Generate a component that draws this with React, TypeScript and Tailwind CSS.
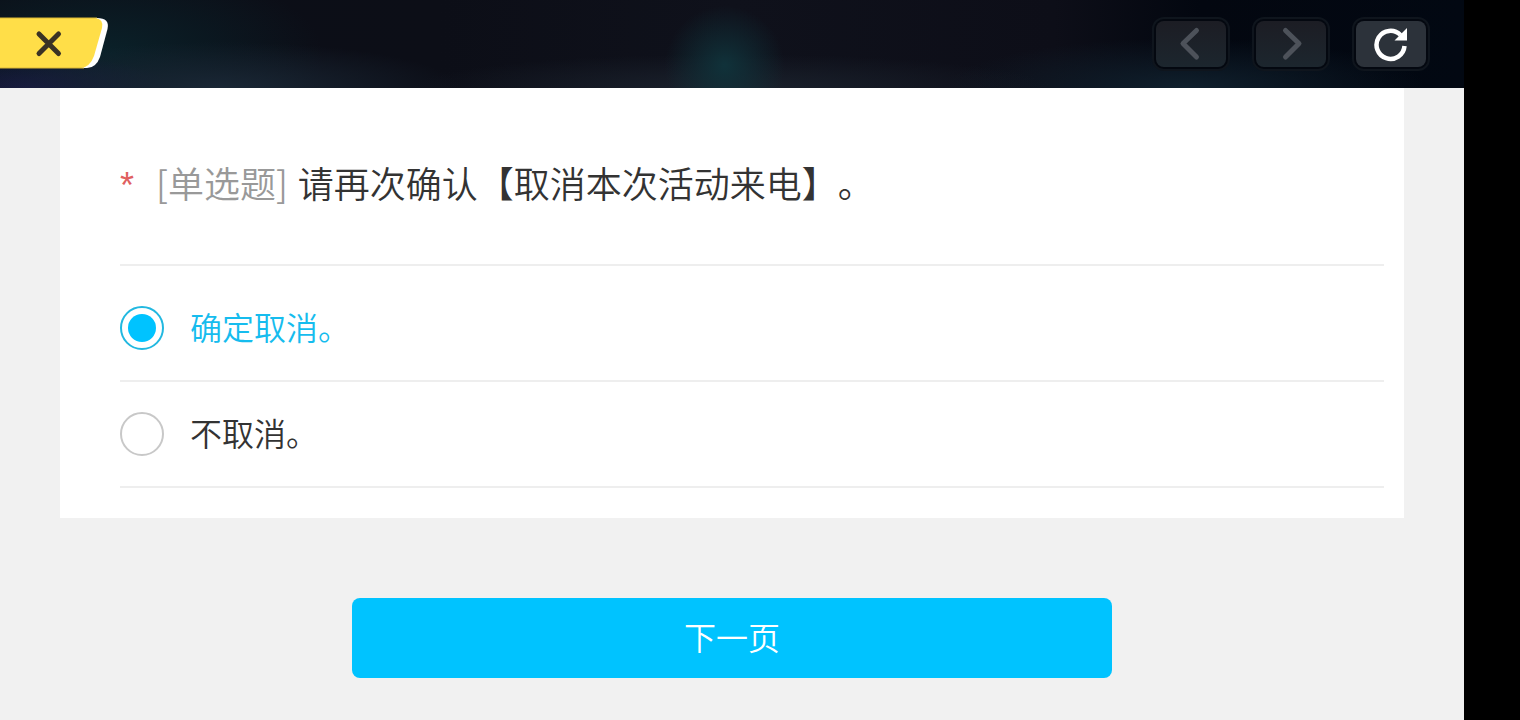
import { useState } from 'react';
import type { ReactNode } from 'react';

interface NavButtonProps {
  label: string;
  disabled?: boolean;
  children: ReactNode;
}

function NavButton({ label, disabled, children }: NavButtonProps) {
  return (
    <button
      aria-label={label}
      disabled={disabled}
      className="h-[54px] w-[78px] rounded-xl border-2 border-[#0f151d] bg-[#040810] p-0.5"
    >
      <span
        className={`flex h-full w-full items-center justify-center rounded-lg ${
          disabled ? 'bg-linear-to-b from-[#1c1d24] to-[#1c262e] text-[#4d525a]' : 'bg-[#2c323a] text-white'
        }`}
      >
        <svg width="36" height="36" viewBox="0 0 36 36" fill="none" className="shrink-0">
          {children}
        </svg>
      </span>
    </button>
  );
}

function TopBar() {
  return (
    <header className="flex h-[88px] items-center justify-between bg-[radial-gradient(ellipse_60px_60px_at_49.5%_75%,#10323a,transparent),radial-gradient(ellipse_240px_46px_at_15%_100%,#1a2735,transparent),radial-gradient(ellipse_140px_34px_at_2%_100%,#171940,transparent),radial-gradient(ellipse_220px_90px_at_7%_60%,#0a2129,transparent),radial-gradient(ellipse_320px_34px_at_50%_100%,#1a212c,transparent),radial-gradient(ellipse_240px_50px_at_81%_100%,#10202d,transparent),linear-gradient(90deg,#0b0e17,#0c0e17_30%,#0f111b_50%,#0d0e18_72%,#030710_82%,#020812)] pr-[34px]">
      <button aria-label="关闭" className="block">
        <svg width="110" height="54" viewBox="0 0 110 54" fill="none">
          <path d="M0 1H97Q110 1 107.500 12L100 40Q96 51 87 51H0Z" fill="#fff" />
          <path d="M0 1H95Q104 2 102 11L94 39Q90 50 81 51H0Z" fill="#ffde48" />
          <path d="M0 1H97M0 51H84" stroke="#d9b634" strokeWidth="1" />
          <path d="M39 17L58.500 36.500M58.500 17L39 36.500" stroke="#3a3224" strokeWidth="5" strokeLinecap="round" />
        </svg>
      </button>
      <nav className="flex gap-[22px]">
        <NavButton label="后退" disabled>
          <path d="M23.500 4.500L10 17.500L23.500 31" stroke="currentColor" strokeWidth="5" strokeLinecap="round" strokeLinejoin="round" />
        </NavButton>
        <NavButton label="前进" disabled>
          <path d="M12.500 4.500L26 17.500L12.500 31" stroke="currentColor" strokeWidth="5" strokeLinecap="round" strokeLinejoin="round" />
        </NavButton>
        <NavButton label="刷新">
          <path d="M31.500 20A14 14 0 1 1 27.500 9" stroke="currentColor" strokeWidth="4.500" />
          <path d="M34 2V14.500H21.500Z" fill="currentColor" />
        </NavButton>
      </nav>
    </header>
  );
}

const options = ['确定取消。', '不取消。'];

export default function App() {
  const [selected, setSelected] = useState(0);

  return (
    <div className="flex min-h-screen bg-black font-['Noto_Sans_CJK_SC',sans-serif] font-[350] text-[#333] [text-spacing-trim:space-all]">
      <div className="min-w-0 flex-1 bg-[#f1f1f1]">
        <TopBar />

        <main>
          <fieldset className="mx-[60px] bg-white pt-[68px] pr-5 pb-[30px] pl-[60px]">
            <legend className="contents">
              <span className="flex h-[110px] items-start border-b-2 border-[#eee] text-4xl leading-[52px]">
                <span className="w-9 font-['Liberation_Sans',sans-serif] leading-[60px] text-[#e06060]">*</span>
                <span className="mr-2.5 text-[#999]">[单选题]</span>
                <span>请再次确认【取消本次活动来电】。</span>
              </span>
            </legend>

            <div className="pt-2.5">
              {options.map((text, i) => (
                <label
                  key={text}
                  className={`flex h-[106px] items-center gap-[26px] border-b-2 border-[#eee] text-[32px] leading-10 ${
                    selected === i ? 'text-[#16bcee]' : ''
                  }`}
                >
                  <input
                    type="radio"
                    name="confirm"
                    checked={selected === i}
                    onChange={() => setSelected(i)}
                    className="size-11 shrink-0 appearance-none rounded-full border-2 border-[#c8c8c8] bg-white bg-clip-content p-1.5 checked:border-[#22b8e0] checked:bg-[#00c3ff]"
                  />
                  <span className="pb-1">{text}</span>
                </label>
              ))}
            </div>
          </fieldset>

          <div className="px-[60px] pt-20 pb-[42px]">
            <button className="mx-auto block h-20 w-full max-w-[760px] rounded-lg bg-[#00c3ff] pb-1 text-[32px] leading-10 text-white">
              下一页
            </button>
          </div>
        </main>
      </div>
      <div className="w-14 shrink-0 bg-black" />
    </div>
  );
}
